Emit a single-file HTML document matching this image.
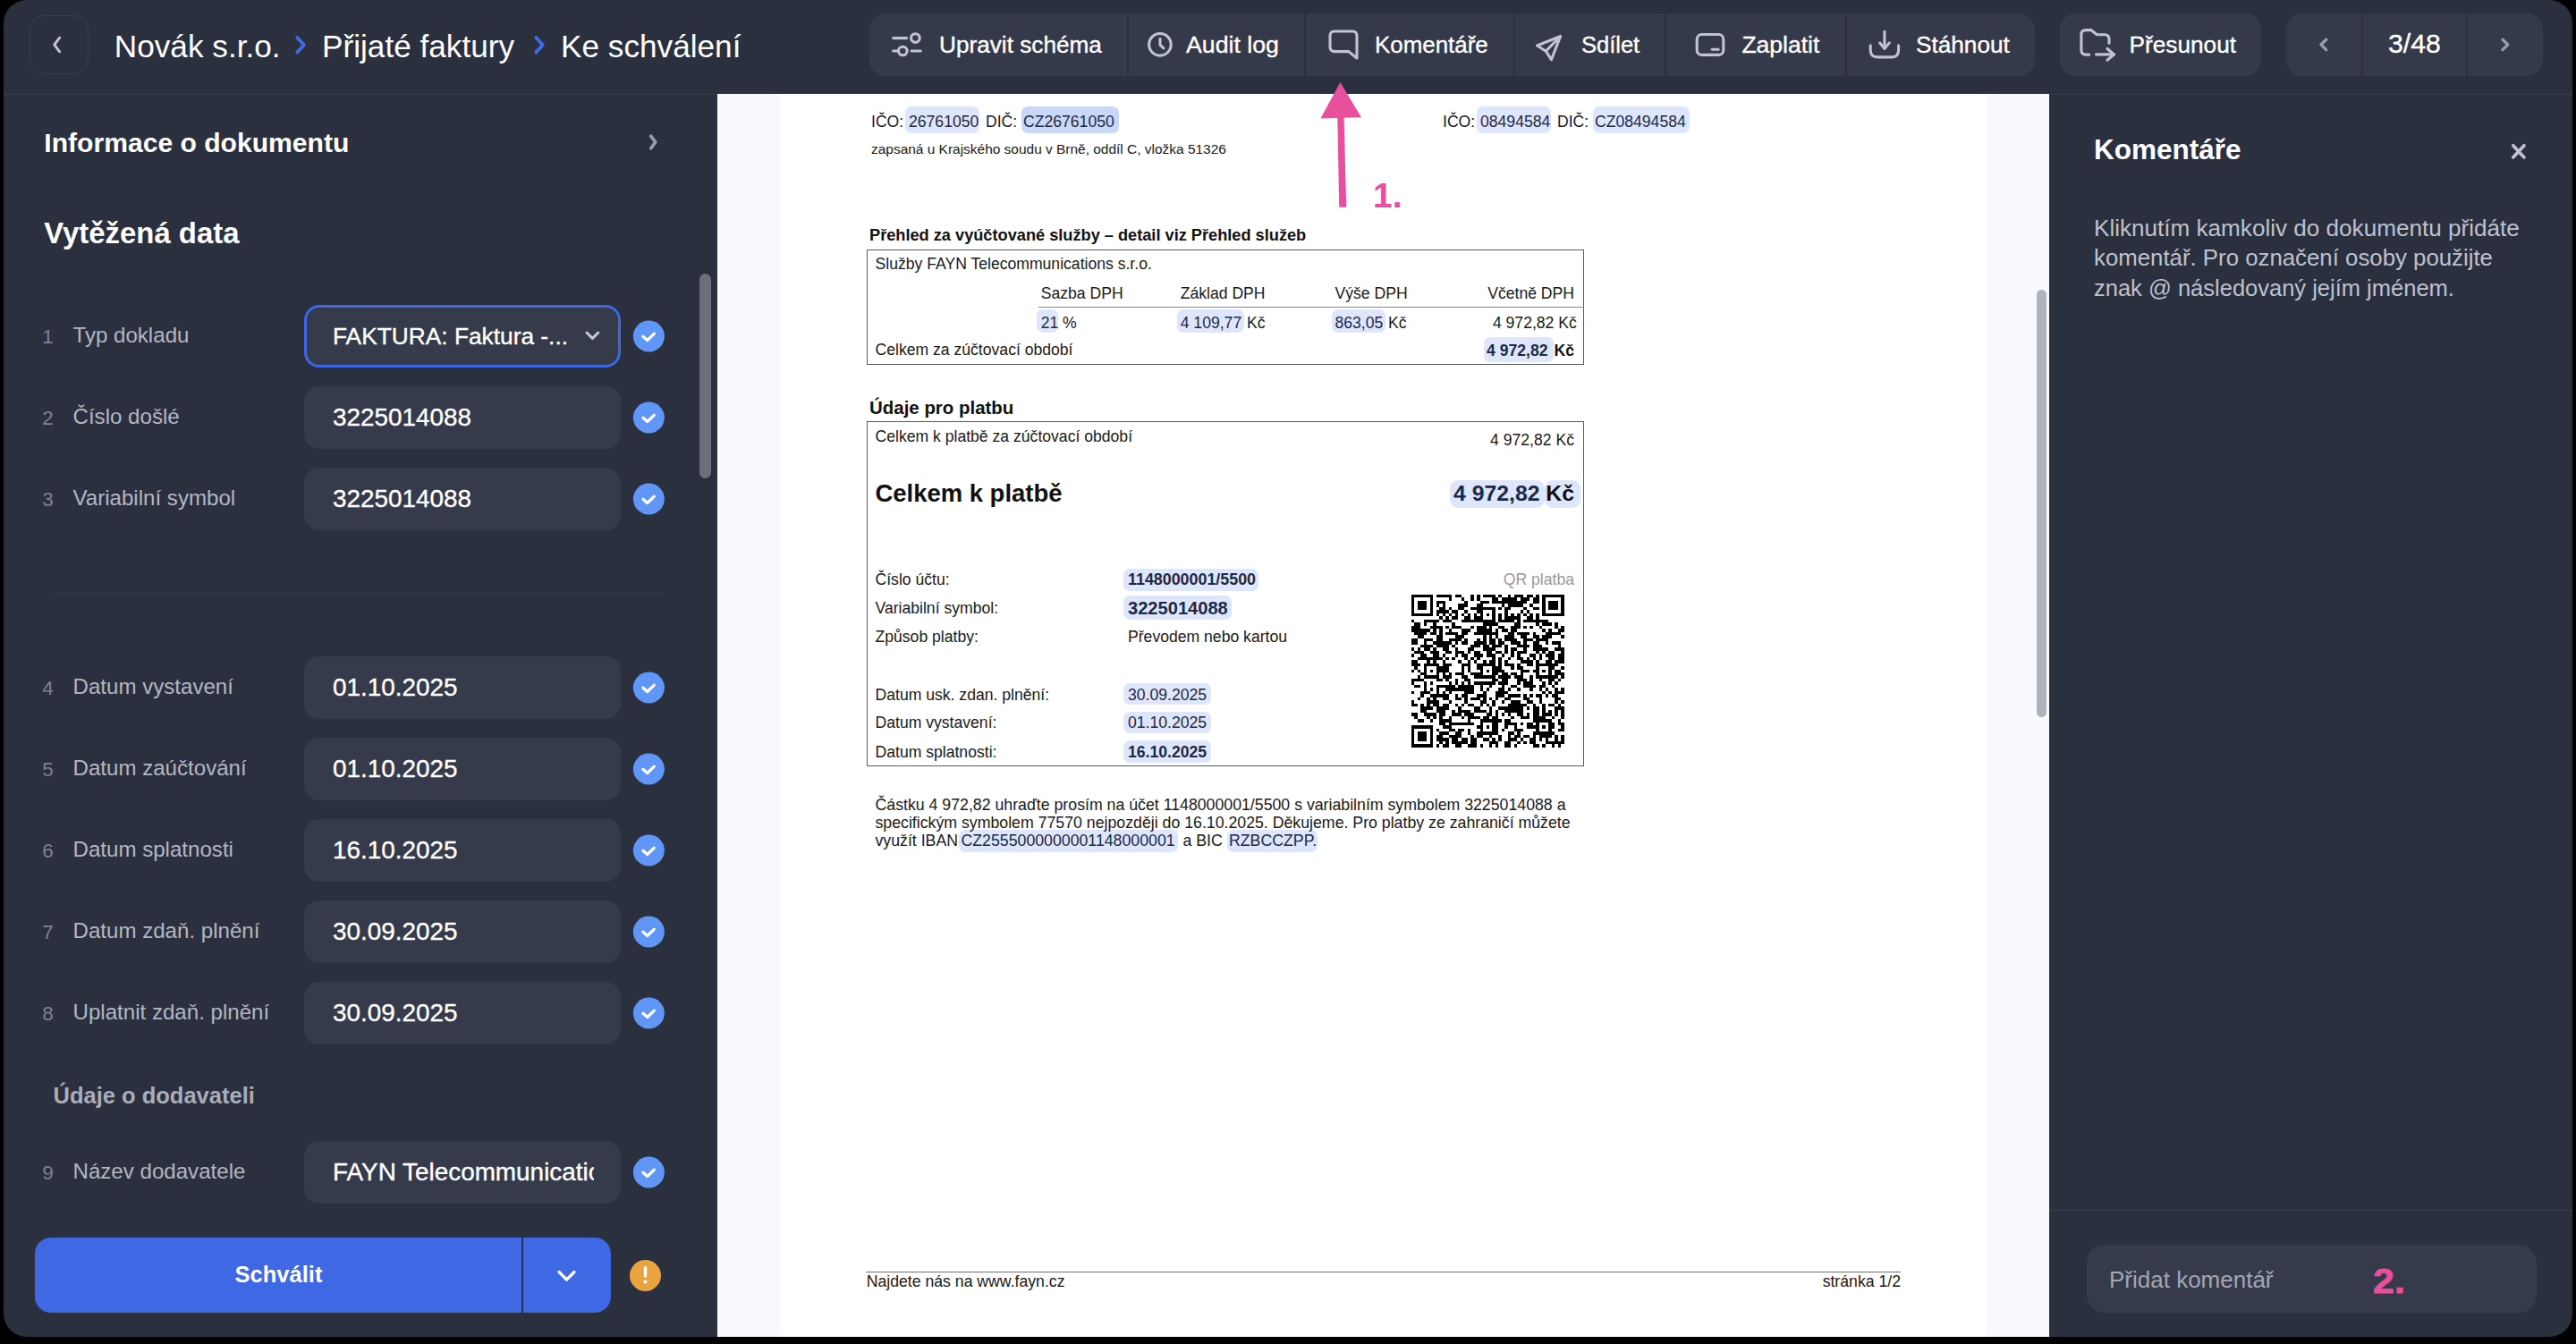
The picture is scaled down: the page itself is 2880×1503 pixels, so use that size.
<!DOCTYPE html>
<html><head><meta charset="utf-8"><title>Ke schválení</title>
<style>
html,body{margin:0;padding:0;background:#000;width:2880px;height:1503px;overflow:hidden;}
#app{position:absolute;left:4px;top:0;width:2872px;height:1495px;border-radius:26px;overflow:hidden;background:#2b303f;}
#stage{position:absolute;left:-4px;top:0;width:2880px;height:1503px;}
.t{position:absolute;white-space:nowrap;line-height:1;font-family:"Liberation Sans",sans-serif;}
.r{position:absolute;}
.s{position:absolute;overflow:visible;}
</style></head><body><div id="app"><div id="stage">
<div class="r" style="left:0.0px;top:105.0px;width:2880.0px;height:1.0px;background:#3a3f4e;border-radius:0px;"></div>
<div class="r" style="left:33px;top:17px;width:64px;height:64px;border:1px solid #393d4d;border-radius:16px;"></div>
<svg class="s" style="left:0;top:0" width="2880" height="110" viewBox="0 0 2880 110"><g fill="none" stroke="#c0c4d2" stroke-width="2.9" stroke-linecap="round" stroke-linejoin="round"><polyline points="66.7,42.2 60.7,50 66.7,57.8"/></g><g fill="none" stroke="#3e6be8" stroke-width="3.8" stroke-linecap="round" stroke-linejoin="round"><polyline points="332.3,42 339.8,50.2 332.3,58.5"/><polyline points="599.3,42 606.8,50.2 599.3,58.5"/></g></svg>
<div class="t" style="left:127.8px;top:33.9px;font-size:35.2px;color:#ffffff;">Novák s.r.o.</div>
<div class="t" style="left:360.0px;top:33.9px;font-size:35.2px;color:#ffffff;">Přijaté faktury</div>
<div class="t" style="left:627.0px;top:33.9px;font-size:35.2px;color:#ffffff;">Ke schválení</div>
<div class="r" style="left:972.0px;top:15.0px;width:1303.0px;height:70.0px;background:#353a4a;border-radius:18px;"></div>
<div class="r" style="left:1260.0px;top:15.0px;width:2.0px;height:70.0px;background:#2c303e;border-radius:0px;"></div>
<div class="r" style="left:1458.0px;top:15.0px;width:2.0px;height:70.0px;background:#2c303e;border-radius:0px;"></div>
<div class="r" style="left:1692.0px;top:15.0px;width:2.0px;height:70.0px;background:#2c303e;border-radius:0px;"></div>
<div class="r" style="left:1861.0px;top:15.0px;width:2.0px;height:70.0px;background:#2c303e;border-radius:0px;"></div>
<div class="r" style="left:2063.0px;top:15.0px;width:2.0px;height:70.0px;background:#2c303e;border-radius:0px;"></div>
<div class="r" style="left:2303.0px;top:15.0px;width:225.0px;height:70.0px;background:#353a4a;border-radius:18px;"></div>
<div class="r" style="left:2556.0px;top:15.0px;width:287.0px;height:70.0px;background:#353a4a;border-radius:18px;"></div>
<div class="r" style="left:2640.0px;top:15.0px;width:2.0px;height:70.0px;background:#2c303e;border-radius:0px;"></div>
<div class="r" style="left:2757.0px;top:15.0px;width:2.0px;height:70.0px;background:#2c303e;border-radius:0px;"></div>
<div class="t" style="left:1050.0px;top:37.3px;font-size:26.2px;color:#ffffff;-webkit-text-stroke:0.35px #fff;">Upravit schéma</div>
<div class="t" style="left:1326.0px;top:36.9px;font-size:26.7px;color:#ffffff;-webkit-text-stroke:0.35px #fff;">Audit log</div>
<div class="t" style="left:1537.0px;top:37.6px;font-size:25.9px;color:#ffffff;-webkit-text-stroke:0.35px #fff;">Komentáře</div>
<div class="t" style="left:1768.0px;top:37.9px;font-size:25.5px;color:#ffffff;-webkit-text-stroke:0.35px #fff;">Sdílet</div>
<div class="t" style="left:1947.4px;top:37.1px;font-size:26.5px;color:#ffffff;-webkit-text-stroke:0.35px #fff;">Zaplatit</div>
<div class="t" style="left:2142.0px;top:37.3px;font-size:26.2px;color:#ffffff;-webkit-text-stroke:0.35px #fff;">Stáhnout</div>
<div class="t" style="left:2380.6px;top:37.3px;font-size:26.2px;color:#ffffff;-webkit-text-stroke:0.35px #fff;">Přesunout</div>
<div class="t" style="left:2670.0px;top:33.9px;font-size:30.2px;color:#ffffff;-webkit-text-stroke:0.35px #fff;">3/48</div>
<svg class="s" style="left:0;top:0" width="2880" height="110" viewBox="0 0 2880 110"><g fill="none" stroke="#c0c4d2" stroke-width="3.1" stroke-linecap="round" stroke-linejoin="round"><line x1="998.7" y1="42.6" x2="1013.6" y2="42.6"/><circle cx="1023.4" cy="42.6" r="4.8"/><line x1="998.7" y1="57" x2="1004.5" y2="57"/><circle cx="1009.3" cy="57" r="4.8"/><line x1="1019.1" y1="57" x2="1029.3" y2="57"/><circle cx="1296.9" cy="49.8" r="12.3"/><polyline points="1297,43.4 1297,50.3 1300.9,53.9"/><path d="M1517,65 L1517,40 Q1517,35 1512,35 L1492,35 Q1487,35 1487,40 L1487,52.6 Q1487,57.6 1492,57.6 L1507.8,57.6 Z"/><path d="M1744.7,40.5 L1718.5,51 L1728.3,57.2 L1734.4,66.7 Z M1728.3,57.2 L1744.7,40.5"/><rect x="1897.2" y="38.5" width="29.6" height="22.9" rx="5.5"/><line x1="1914.2" y1="55.2" x2="1921.1" y2="55.2"/><line x1="2106.9" y1="35.2" x2="2106.9" y2="54.2"/><polyline points="2101.7,48 2106.9,54.2 2112.3,48"/><path d="M2091.2,50.9 L2091.2,56 Q2091.2,63.9 2099,63.9 L2115,63.9 Q2122.6,63.9 2122.6,56 L2122.6,50.9"/><path d="M2335.7,61.1 L2332,61.1 Q2326.9,61.1 2326.9,56 L2326.9,38.6 Q2326.9,33.6 2332,33.6 L2338,33.6 L2344.2,38.8 L2353,38.8 Q2358,38.8 2358,43.8 L2358,48.3"/><line x1="2343.6" y1="60.9" x2="2363.5" y2="60.9"/><polyline points="2356,54.5 2363.5,60.9 2356,67.3"/></g><g fill="none" stroke="#989dab" stroke-width="3.4" stroke-linecap="round" stroke-linejoin="round"><polyline points="2600.7,44.3 2594.9,49.9 2600.7,55.6"/><polyline points="2798,44.3 2803.8,49.9 2798,55.6"/></g></svg>
<div class="t" style="left:49.3px;top:144.5px;font-size:30.1px;color:#ffffff;font-weight:700;">Informace o dokumentu</div>
<svg class="s" style="left:715px;top:145px" width="30" height="30" viewBox="0 0 30 30"><polyline points="12.7,7.1 17.8,14 12.7,20.9" fill="none" stroke="#989dab" stroke-width="3.6" stroke-linecap="round" stroke-linejoin="round"/></svg>
<div class="t" style="left:49.3px;top:245.2px;font-size:32.9px;color:#ffffff;font-weight:700;">Vytěžená data</div>
<div class="r" style="left:781.5px;top:306.0px;width:13.5px;height:229.0px;background:#6b6f7e;border-radius:7px;"></div>
<div class="t" style="left:47.3px;top:365.5px;font-size:22.5px;color:#7d8291;">1</div>
<div class="t" style="left:81.5px;top:362.6px;font-size:24.1px;color:#b3b7c2;">Typ dokladu</div>
<div class="r" style="left:340px;top:341px;width:354px;height:70px;box-sizing:border-box;border:3px solid #3c67e6;background:#363b4b;border-radius:17px;"></div>
<div class="t" style="left:372.0px;top:363.2px;font-size:26.3px;color:#ffffff;-webkit-text-stroke:0.35px #fff;">FAKTURA: Faktura -...</div>
<div class="t" style="left:47.3px;top:456.5px;font-size:22.5px;color:#7d8291;">2</div>
<div class="t" style="left:81.5px;top:453.6px;font-size:24.1px;color:#b3b7c2;">Číslo došlé</div>
<div class="r" style="left:340.0px;top:432.0px;width:354.0px;height:70.0px;background:#363b4b;border-radius:17px;"></div>
<div class="t" style="left:372.0px;top:452.9px;font-size:27.9px;color:#ffffff;-webkit-text-stroke:0.35px #fff;">3225014088</div>
<div class="t" style="left:47.3px;top:547.5px;font-size:22.5px;color:#7d8291;">3</div>
<div class="t" style="left:81.5px;top:544.6px;font-size:24.1px;color:#b3b7c2;">Variabilní symbol</div>
<div class="r" style="left:340.0px;top:523.0px;width:354.0px;height:70.0px;background:#363b4b;border-radius:17px;"></div>
<div class="t" style="left:372.0px;top:543.9px;font-size:27.9px;color:#ffffff;-webkit-text-stroke:0.35px #fff;">3225014088</div>
<div class="t" style="left:47.3px;top:758.5px;font-size:22.5px;color:#7d8291;">4</div>
<div class="t" style="left:81.5px;top:755.6px;font-size:24.1px;color:#b3b7c2;">Datum vystavení</div>
<div class="r" style="left:340.0px;top:734.0px;width:354.0px;height:70.0px;background:#363b4b;border-radius:17px;"></div>
<div class="t" style="left:372.0px;top:754.9px;font-size:27.9px;color:#ffffff;-webkit-text-stroke:0.35px #fff;">01.10.2025</div>
<div class="t" style="left:47.3px;top:849.5px;font-size:22.5px;color:#7d8291;">5</div>
<div class="t" style="left:81.5px;top:846.6px;font-size:24.1px;color:#b3b7c2;">Datum zaúčtování</div>
<div class="r" style="left:340.0px;top:825.0px;width:354.0px;height:70.0px;background:#363b4b;border-radius:17px;"></div>
<div class="t" style="left:372.0px;top:845.9px;font-size:27.9px;color:#ffffff;-webkit-text-stroke:0.35px #fff;">01.10.2025</div>
<div class="t" style="left:47.3px;top:940.5px;font-size:22.5px;color:#7d8291;">6</div>
<div class="t" style="left:81.5px;top:937.6px;font-size:24.1px;color:#b3b7c2;">Datum splatnosti</div>
<div class="r" style="left:340.0px;top:916.0px;width:354.0px;height:70.0px;background:#363b4b;border-radius:17px;"></div>
<div class="t" style="left:372.0px;top:936.9px;font-size:27.9px;color:#ffffff;-webkit-text-stroke:0.35px #fff;">16.10.2025</div>
<div class="t" style="left:47.3px;top:1031.5px;font-size:22.5px;color:#7d8291;">7</div>
<div class="t" style="left:81.5px;top:1028.6px;font-size:24.1px;color:#b3b7c2;">Datum zdaň. plnění</div>
<div class="r" style="left:340.0px;top:1007.0px;width:354.0px;height:70.0px;background:#363b4b;border-radius:17px;"></div>
<div class="t" style="left:372.0px;top:1027.9px;font-size:27.9px;color:#ffffff;-webkit-text-stroke:0.35px #fff;">30.09.2025</div>
<div class="t" style="left:47.3px;top:1122.5px;font-size:22.5px;color:#7d8291;">8</div>
<div class="t" style="left:81.5px;top:1119.6px;font-size:24.1px;color:#b3b7c2;">Uplatnit zdaň. plnění</div>
<div class="r" style="left:340.0px;top:1098.0px;width:354.0px;height:70.0px;background:#363b4b;border-radius:17px;"></div>
<div class="t" style="left:372.0px;top:1118.9px;font-size:27.9px;color:#ffffff;-webkit-text-stroke:0.35px #fff;">30.09.2025</div>
<div class="t" style="left:47.3px;top:1300.5px;font-size:22.5px;color:#7d8291;">9</div>
<div class="t" style="left:81.5px;top:1297.6px;font-size:24.1px;color:#b3b7c2;">Název dodavatele</div>
<div class="r" style="left:340.0px;top:1276.0px;width:354.0px;height:70.0px;background:#363b4b;border-radius:17px;"></div>
<div class="t" style="left:372px;top:1276px;width:292px;height:70px;overflow:hidden;"><div class="t" style="left:0.0px;top:20.9px;font-size:27.9px;color:#ffffff;-webkit-text-stroke:0.35px #fff;">FAYN Telecommunications s.r.o.</div>
</div>
<svg class="s" style="left:0;top:0" width="800" height="1503" viewBox="0 0 800 1503"><polyline points="656,372 662.4,378.4 668.8,372" fill="none" stroke="#c5c8d2" stroke-width="3" stroke-linecap="round" stroke-linejoin="round"/><circle cx="725.4" cy="376" r="17.5" fill="#6097f6"/><polyline points="719,376.2 723.7,380.5 731.4,373.2" fill="none" stroke="#fff" stroke-width="3.2" stroke-linecap="round" stroke-linejoin="round"/><circle cx="725.4" cy="467" r="17.5" fill="#6097f6"/><polyline points="719,467.2 723.7,471.5 731.4,464.2" fill="none" stroke="#fff" stroke-width="3.2" stroke-linecap="round" stroke-linejoin="round"/><circle cx="725.4" cy="558" r="17.5" fill="#6097f6"/><polyline points="719,558.2 723.7,562.5 731.4,555.2" fill="none" stroke="#fff" stroke-width="3.2" stroke-linecap="round" stroke-linejoin="round"/><circle cx="725.4" cy="769" r="17.5" fill="#6097f6"/><polyline points="719,769.2 723.7,773.5 731.4,766.2" fill="none" stroke="#fff" stroke-width="3.2" stroke-linecap="round" stroke-linejoin="round"/><circle cx="725.4" cy="860" r="17.5" fill="#6097f6"/><polyline points="719,860.2 723.7,864.5 731.4,857.2" fill="none" stroke="#fff" stroke-width="3.2" stroke-linecap="round" stroke-linejoin="round"/><circle cx="725.4" cy="951" r="17.5" fill="#6097f6"/><polyline points="719,951.2 723.7,955.5 731.4,948.2" fill="none" stroke="#fff" stroke-width="3.2" stroke-linecap="round" stroke-linejoin="round"/><circle cx="725.4" cy="1042" r="17.5" fill="#6097f6"/><polyline points="719,1042.2 723.7,1046.5 731.4,1039.2" fill="none" stroke="#fff" stroke-width="3.2" stroke-linecap="round" stroke-linejoin="round"/><circle cx="725.4" cy="1133" r="17.5" fill="#6097f6"/><polyline points="719,1133.2 723.7,1137.5 731.4,1130.2" fill="none" stroke="#fff" stroke-width="3.2" stroke-linecap="round" stroke-linejoin="round"/><circle cx="725.4" cy="1311" r="17.5" fill="#6097f6"/><polyline points="719,1311.2 723.7,1315.5 731.4,1308.2" fill="none" stroke="#fff" stroke-width="3.2" stroke-linecap="round" stroke-linejoin="round"/></svg>
<div class="r" style="left:60.0px;top:663.0px;width:683.0px;height:1.0px;background:#373b4a;border-radius:0px;"></div>
<div class="t" style="left:59.5px;top:1212.9px;font-size:25.5px;color:#a9adb8;font-weight:700;">Údaje o dodavateli</div>
<div class="r" style="left:39.0px;top:1384.0px;width:644.0px;height:84.0px;background:#3f68e4;border-radius:18px;"></div>
<div class="r" style="left:582.5px;top:1384.0px;width:2.5px;height:84.0px;background:#2c303e;border-radius:0px;"></div>
<div class="t" style="left:311.5px;top:1413.4px;font-size:25.5px;color:#ffffff;font-weight:700;transform:translateX(-50%);">Schválit</div>
<svg class="s" style="left:0;top:1380px" width="800" height="100" viewBox="0 1380 800 100"><polyline points="625,1422.5 633.5,1431 642,1422.5" fill="none" stroke="#fff" stroke-width="3.2" stroke-linecap="round" stroke-linejoin="round"/><circle cx="721.5" cy="1426.5" r="17.5" fill="#eaa43f"/><line x1="721.5" y1="1417.5" x2="721.5" y2="1427" stroke="#fff" stroke-width="3.4" stroke-linecap="round"/><circle cx="721.5" cy="1433.5" r="2" fill="#fff"/></svg>
<div class="r" style="left:802.0px;top:105.0px;width:1489.0px;height:1390.0px;background:#f7f9fc;border-radius:0px;"></div>
<div class="r" style="left:872.0px;top:105.0px;width:1349.0px;height:1390.0px;background:#ffffff;border-radius:0px;"></div>
<div class="r" style="left:2277.0px;top:324.0px;width:11.0px;height:478.0px;background:#adb2bb;border-radius:5.5px;"></div>
<div class="r" style="left:1012.4px;top:118.8px;width:82.6px;height:30.0px;background:#dde6fb;border-radius:7px;"></div>
<div class="r" style="left:1142.0px;top:118.8px;width:108.7px;height:30.0px;background:#c9d8f7;border-radius:7px;"></div>
<div class="r" style="left:1651.0px;top:118.8px;width:82.8px;height:29.9px;background:#dde6fb;border-radius:7px;"></div>
<div class="r" style="left:1780.6px;top:118.8px;width:108.4px;height:29.9px;background:#dde6fb;border-radius:7px;"></div>
<div class="t" style="left:974.0px;top:127.9px;font-size:17.6px;color:#1a1a1a;">IČO:</div>
<div class="t" style="left:1016.0px;top:127.9px;font-size:17.6px;color:#1f2945;">26761050</div>
<div class="t" style="left:1102.0px;top:127.9px;font-size:17.6px;color:#1a1a1a;">DIČ:</div>
<div class="t" style="left:1144.0px;top:127.9px;font-size:17.6px;color:#1f2945;">CZ26761050</div>
<div class="t" style="left:1613.0px;top:127.6px;font-size:17.6px;color:#1a1a1a;">IČO:</div>
<div class="t" style="left:1655.0px;top:127.6px;font-size:17.6px;color:#1f2945;">08494584</div>
<div class="t" style="left:1741.0px;top:127.6px;font-size:17.6px;color:#1a1a1a;">DIČ:</div>
<div class="t" style="left:1783.0px;top:127.6px;font-size:17.6px;color:#1f2945;">CZ08494584</div>
<div class="t" style="left:974.0px;top:159.3px;font-size:15.46px;color:#1a1a1a;">zapsaná u Krajského soudu v Brně, oddíl C, vložka 51326</div>
<div class="t" style="left:972.0px;top:254.3px;font-size:18.2px;color:#111;font-weight:700;">Přehled za vyúčtované služby – detail viz Přehled služeb</div>
<div class="r" style="left:969px;top:279px;width:802px;height:129px;box-sizing:border-box;border:1.5px solid #5a5a5a;"></div>
<div class="t" style="left:978.5px;top:286.7px;font-size:17.6px;color:#1a1a1a;">Služby FAYN Telecommunications s.r.o.</div>
<div class="t" style="left:1163.7px;top:319.5px;font-size:17.6px;color:#1a1a1a;">Sazba DPH</div>
<div class="t" style="left:1319.7px;top:319.5px;font-size:17.6px;color:#1a1a1a;">Základ DPH</div>
<div class="t" style="left:1492.5px;top:319.5px;font-size:17.6px;color:#1a1a1a;">Výše DPH</div>
<div class="t" style="right:1120.0px;top:319.5px;font-size:17.6px;color:#1a1a1a;">Včetně DPH</div>
<div class="r" style="left:1161.0px;top:342.8px;width:610.0px;height:1.2px;background:#8a8a8a;border-radius:0px;"></div>
<div class="r" style="left:1159.0px;top:345.5px;width:24.0px;height:26.1px;background:#dde6fb;border-radius:7px;"></div>
<div class="r" style="left:1316.0px;top:345.5px;width:75.3px;height:26.1px;background:#dde6fb;border-radius:7px;"></div>
<div class="r" style="left:1489.0px;top:345.5px;width:60.0px;height:26.1px;background:#dde6fb;border-radius:7px;"></div>
<div class="t" style="left:1163.7px;top:352.7px;font-size:17.6px;color:#1f2945;">21</div>
<div class="t" style="left:1188.0px;top:352.7px;font-size:17.6px;color:#1a1a1a;">%</div>
<div class="t" style="left:1319.7px;top:352.7px;font-size:17.6px;color:#1f2945;">4 109,77</div>
<div class="t" style="left:1394.0px;top:352.7px;font-size:17.6px;color:#1a1a1a;">Kč</div>
<div class="t" style="left:1492.5px;top:352.7px;font-size:17.6px;color:#1f2945;">863,05</div>
<div class="t" style="left:1552.0px;top:352.7px;font-size:17.6px;color:#1a1a1a;">Kč</div>
<div class="t" style="right:1117.2px;top:352.7px;font-size:17.6px;color:#1a1a1a;">4 972,82 Kč</div>
<div class="t" style="left:978.5px;top:383.4px;font-size:17.6px;color:#1a1a1a;">Celkem za zúčtovací období</div>
<div class="r" style="left:1658.7px;top:376.7px;width:78.0px;height:28.6px;background:#dde6fb;border-radius:7px;"></div>
<div class="t" style="left:1662.0px;top:383.6px;font-size:17.6px;color:#1f2945;font-weight:700;">4 972,82</div>
<div class="t" style="right:1120.0px;top:383.6px;font-size:17.6px;color:#111;font-weight:700;">Kč</div>
<div class="t" style="left:972.0px;top:445.5px;font-size:20.47px;color:#111;font-weight:700;">Údaje pro platbu</div>
<div class="r" style="left:969px;top:471px;width:802px;height:386px;box-sizing:border-box;border:1.5px solid #5a5a5a;"></div>
<div class="t" style="left:978.5px;top:479.7px;font-size:17.6px;color:#1a1a1a;">Celkem k platbě za zúčtovací období</div>
<div class="t" style="right:1120.0px;top:483.5px;font-size:17.6px;color:#1a1a1a;">4 972,82 Kč</div>
<div class="t" style="left:978.5px;top:537.8px;font-size:27.45px;color:#111;font-weight:700;">Celkem k platbě</div>
<div class="r" style="left:1620.5px;top:536.6px;width:106.5px;height:31.2px;background:#dde6fb;border-radius:9px;"></div>
<div class="r" style="left:1727.0px;top:536.6px;width:40.0px;height:31.2px;background:#dde6fb;border-radius:9px;"></div>
<div class="t" style="left:1625.0px;top:540.0px;font-size:24.8px;color:#1f2945;font-weight:700;">4 972,82</div>
<div class="t" style="right:1120.0px;top:540.0px;font-size:24.8px;color:#111;font-weight:700;">Kč</div>
<div class="r" style="left:1256.0px;top:636.4px;width:151.0px;height:24.6px;background:#dde6fb;border-radius:7px;"></div>
<div class="t" style="left:978.5px;top:639.9px;font-size:17.6px;color:#1a1a1a;">Číslo účtu:</div>
<div class="t" style="left:1261.0px;top:639.7px;font-size:17.86px;color:#1f2945;font-weight:700;">1148000001/5500</div>
<div class="t" style="right:1120.0px;top:639.9px;font-size:17.6px;color:#9a9a9a;">QR platba</div>
<div class="r" style="left:1256.0px;top:665.6px;width:121.0px;height:27.4px;background:#dde6fb;border-radius:7px;"></div>
<div class="t" style="left:978.5px;top:671.8px;font-size:17.6px;color:#1a1a1a;">Variabilní symbol:</div>
<div class="t" style="left:1261.0px;top:669.7px;font-size:20.1px;color:#1f2945;font-weight:700;">3225014088</div>
<div class="t" style="left:978.5px;top:703.6px;font-size:17.6px;color:#1a1a1a;">Způsob platby:</div>
<div class="t" style="left:1261.0px;top:703.6px;font-size:17.6px;color:#1a1a1a;">Převodem nebo kartou</div>
<div class="r" style="left:1256.0px;top:763.7px;width:97.8px;height:24.8px;background:#dde6fb;border-radius:7px;"></div>
<div class="r" style="left:1256.0px;top:795.5px;width:97.8px;height:24.9px;background:#dde6fb;border-radius:7px;"></div>
<div class="r" style="left:1256.0px;top:828.0px;width:97.8px;height:24.8px;background:#dde6fb;border-radius:7px;"></div>
<div class="t" style="left:978.5px;top:768.5px;font-size:17.6px;color:#1a1a1a;">Datum usk. zdan. plnění:</div>
<div class="t" style="left:1261.0px;top:768.5px;font-size:17.6px;color:#1f2945;">30.09.2025</div>
<div class="t" style="left:978.5px;top:799.7px;font-size:17.6px;color:#1a1a1a;">Datum vystavení:</div>
<div class="t" style="left:1261.0px;top:799.7px;font-size:17.6px;color:#1f2945;">01.10.2025</div>
<div class="t" style="left:978.5px;top:832.5px;font-size:17.6px;color:#1a1a1a;">Datum splatnosti:</div>
<div class="t" style="left:1261.0px;top:832.5px;font-size:17.6px;color:#1f2945;font-weight:700;">16.10.2025</div>
<svg class="s" style="left:1577.6px;top:665px" width="170.5" height="170.5" viewBox="0 0 49 49" shape-rendering="crispEdges"><path d="M0,0h7v1h-7zM8,0h5v1h-5zM14,0h2v1h-2zM19,0h1v1h-1zM21,0h1v1h-1zM23,0h4v1h-4zM28,0h1v1h-1zM31,0h1v1h-1zM33,0h3v1h-3zM37,0h2v1h-2zM40,0h1v1h-1zM42,0h7v1h-7zM0,1h1v1h-1zM6,1h1v1h-1zM12,1h1v1h-1zM16,1h1v1h-1zM19,1h1v1h-1zM21,1h1v1h-1zM26,1h2v1h-2zM29,1h5v1h-5zM35,1h3v1h-3zM39,1h2v1h-2zM42,1h1v1h-1zM48,1h1v1h-1zM0,2h1v1h-1zM2,2h3v1h-3zM6,2h1v1h-1zM8,2h3v1h-3zM17,2h1v1h-1zM22,2h3v1h-3zM26,2h11v1h-11zM39,2h2v1h-2zM42,2h1v1h-1zM44,2h3v1h-3zM48,2h1v1h-1zM0,3h1v1h-1zM2,3h3v1h-3zM6,3h1v1h-1zM8,3h1v1h-1zM10,3h1v1h-1zM15,3h3v1h-3zM21,3h2v1h-2zM29,3h1v1h-1zM31,3h5v1h-5zM38,3h1v1h-1zM42,3h1v1h-1zM44,3h3v1h-3zM48,3h1v1h-1zM0,4h1v1h-1zM2,4h3v1h-3zM6,4h1v1h-1zM9,4h2v1h-2zM12,4h1v1h-1zM15,4h2v1h-2zM19,4h8v1h-8zM28,4h1v1h-1zM30,4h2v1h-2zM36,4h1v1h-1zM39,4h2v1h-2zM42,4h1v1h-1zM44,4h3v1h-3zM48,4h1v1h-1zM0,5h1v1h-1zM6,5h1v1h-1zM8,5h4v1h-4zM13,5h2v1h-2zM17,5h1v1h-1zM21,5h2v1h-2zM26,5h1v1h-1zM30,5h1v1h-1zM35,5h1v1h-1zM37,5h1v1h-1zM42,5h1v1h-1zM48,5h1v1h-1zM0,6h7v1h-7zM8,6h1v1h-1zM10,6h1v1h-1zM12,6h1v1h-1zM14,6h1v1h-1zM16,6h1v1h-1zM18,6h1v1h-1zM20,6h1v1h-1zM22,6h1v1h-1zM24,6h1v1h-1zM26,6h1v1h-1zM28,6h1v1h-1zM30,6h1v1h-1zM32,6h1v1h-1zM34,6h1v1h-1zM36,6h1v1h-1zM38,6h1v1h-1zM40,6h1v1h-1zM42,6h7v1h-7zM9,7h1v1h-1zM11,7h1v1h-1zM13,7h2v1h-2zM17,7h2v1h-2zM20,7h3v1h-3zM26,7h1v1h-1zM28,7h1v1h-1zM30,7h5v1h-5zM37,7h2v1h-2zM40,7h1v1h-1zM0,8h1v1h-1zM4,8h5v1h-5zM10,8h3v1h-3zM16,8h11v1h-11zM28,8h5v1h-5zM34,8h1v1h-1zM36,8h8v1h-8zM1,9h2v1h-2zM4,9h1v1h-1zM7,9h1v1h-1zM13,9h1v1h-1zM23,9h5v1h-5zM33,9h2v1h-2zM40,9h1v1h-1zM42,9h3v1h-3zM46,9h1v1h-1zM0,10h3v1h-3zM6,10h4v1h-4zM11,10h1v1h-1zM13,10h3v1h-3zM19,10h1v1h-1zM21,10h3v1h-3zM25,10h1v1h-1zM28,10h2v1h-2zM32,10h3v1h-3zM36,10h1v1h-1zM38,10h1v1h-1zM41,10h1v1h-1zM46,10h1v1h-1zM48,10h1v1h-1zM0,11h6v1h-6zM7,11h1v1h-1zM9,11h1v1h-1zM12,11h1v1h-1zM16,11h3v1h-3zM21,11h5v1h-5zM27,11h1v1h-1zM29,11h2v1h-2zM32,11h2v1h-2zM42,11h1v1h-1zM44,11h1v1h-1zM47,11h2v1h-2zM1,12h4v1h-4zM6,12h2v1h-2zM9,12h1v1h-1zM11,12h4v1h-4zM16,12h2v1h-2zM20,12h8v1h-8zM31,12h2v1h-2zM34,12h4v1h-4zM39,12h1v1h-1zM43,12h5v1h-5zM2,13h2v1h-2zM8,13h2v1h-2zM14,13h3v1h-3zM23,13h1v1h-1zM25,13h1v1h-1zM27,13h1v1h-1zM30,13h3v1h-3zM35,13h2v1h-2zM39,13h2v1h-2zM42,13h3v1h-3zM48,13h1v1h-1zM0,14h2v1h-2zM4,14h3v1h-3zM8,14h2v1h-2zM12,14h4v1h-4zM17,14h1v1h-1zM21,14h1v1h-1zM23,14h1v1h-1zM25,14h2v1h-2zM28,14h1v1h-1zM30,14h4v1h-4zM36,14h3v1h-3zM40,14h4v1h-4zM0,15h2v1h-2zM4,15h1v1h-1zM7,15h6v1h-6zM14,15h1v1h-1zM16,15h2v1h-2zM20,15h4v1h-4zM25,15h2v1h-2zM28,15h2v1h-2zM32,15h3v1h-3zM36,15h1v1h-1zM39,15h2v1h-2zM43,15h1v1h-1zM45,15h3v1h-3zM3,16h4v1h-4zM8,16h4v1h-4zM13,16h1v1h-1zM19,16h3v1h-3zM23,16h2v1h-2zM26,16h3v1h-3zM30,16h1v1h-1zM34,16h4v1h-4zM39,16h3v1h-3zM47,16h1v1h-1zM0,17h1v1h-1zM2,17h1v1h-1zM4,17h2v1h-2zM7,17h1v1h-1zM10,17h2v1h-2zM14,17h1v1h-1zM18,17h2v1h-2zM23,17h4v1h-4zM30,17h1v1h-1zM32,17h2v1h-2zM36,17h1v1h-1zM39,17h5v1h-5zM46,17h3v1h-3zM1,18h3v1h-3zM6,18h3v1h-3zM11,18h2v1h-2zM14,18h3v1h-3zM18,18h1v1h-1zM20,18h2v1h-2zM24,18h2v1h-2zM27,18h2v1h-2zM30,18h1v1h-1zM32,18h1v1h-1zM34,18h3v1h-3zM40,18h1v1h-1zM42,18h1v1h-1zM44,18h2v1h-2zM48,18h1v1h-1zM0,19h1v1h-1zM3,19h2v1h-2zM7,19h2v1h-2zM10,19h1v1h-1zM14,19h1v1h-1zM16,19h2v1h-2zM20,19h3v1h-3zM24,19h3v1h-3zM29,19h1v1h-1zM32,19h1v1h-1zM34,19h1v1h-1zM38,19h2v1h-2zM41,19h1v1h-1zM43,19h3v1h-3zM47,19h2v1h-2zM2,20h8v1h-8zM11,20h1v1h-1zM13,20h1v1h-1zM17,20h1v1h-1zM19,20h1v1h-1zM21,20h1v1h-1zM26,20h1v1h-1zM28,20h1v1h-1zM31,20h1v1h-1zM34,20h2v1h-2zM37,20h1v1h-1zM39,20h1v1h-1zM41,20h1v1h-1zM44,20h2v1h-2zM47,20h2v1h-2zM0,21h2v1h-2zM5,21h1v1h-1zM7,21h1v1h-1zM10,21h1v1h-1zM15,21h1v1h-1zM18,21h1v1h-1zM20,21h1v1h-1zM23,21h1v1h-1zM25,21h2v1h-2zM28,21h1v1h-1zM30,21h1v1h-1zM35,21h4v1h-4zM40,21h1v1h-1zM43,21h2v1h-2zM46,21h3v1h-3zM0,22h3v1h-3zM4,22h5v1h-5zM10,22h3v1h-3zM16,22h3v1h-3zM21,22h6v1h-6zM28,22h1v1h-1zM30,22h3v1h-3zM34,22h1v1h-1zM37,22h2v1h-2zM40,22h7v1h-7zM1,23h1v1h-1zM4,23h1v1h-1zM8,23h4v1h-4zM16,23h1v1h-1zM18,23h1v1h-1zM21,23h2v1h-2zM26,23h3v1h-3zM32,23h1v1h-1zM34,23h2v1h-2zM40,23h1v1h-1zM44,23h2v1h-2zM48,23h1v1h-1zM0,24h1v1h-1zM2,24h1v1h-1zM4,24h1v1h-1zM6,24h1v1h-1zM8,24h4v1h-4zM16,24h1v1h-1zM18,24h1v1h-1zM22,24h1v1h-1zM24,24h1v1h-1zM26,24h4v1h-4zM35,24h3v1h-3zM39,24h2v1h-2zM42,24h1v1h-1zM44,24h1v1h-1zM46,24h2v1h-2zM3,25h2v1h-2zM8,25h1v1h-1zM10,25h1v1h-1zM12,25h1v1h-1zM14,25h3v1h-3zM19,25h4v1h-4zM26,25h2v1h-2zM29,25h2v1h-2zM32,25h2v1h-2zM35,25h1v1h-1zM40,25h1v1h-1zM44,25h1v1h-1zM46,25h3v1h-3zM2,26h1v1h-1zM4,26h5v1h-5zM10,26h3v1h-3zM16,26h2v1h-2zM20,26h7v1h-7zM28,26h4v1h-4zM33,26h3v1h-3zM38,26h1v1h-1zM40,26h7v1h-7zM48,26h1v1h-1zM0,27h4v1h-4zM8,27h2v1h-2zM11,27h1v1h-1zM14,27h1v1h-1zM17,27h2v1h-2zM26,27h2v1h-2zM29,27h2v1h-2zM34,27h3v1h-3zM38,27h1v1h-1zM41,27h1v1h-1zM44,27h2v1h-2zM47,27h1v1h-1zM0,28h1v1h-1zM4,28h1v1h-1zM6,28h1v1h-1zM12,28h1v1h-1zM14,28h1v1h-1zM16,28h1v1h-1zM18,28h1v1h-1zM20,28h7v1h-7zM28,28h3v1h-3zM34,28h1v1h-1zM36,28h3v1h-3zM42,28h1v1h-1zM44,28h1v1h-1zM46,28h1v1h-1zM1,29h2v1h-2zM4,29h1v1h-1zM8,29h6v1h-6zM15,29h5v1h-5zM22,29h1v1h-1zM25,29h1v1h-1zM29,29h1v1h-1zM32,29h2v1h-2zM36,29h4v1h-4zM41,29h2v1h-2zM45,29h1v1h-1zM4,30h1v1h-1zM6,30h1v1h-1zM8,30h1v1h-1zM11,30h9v1h-9zM22,30h1v1h-1zM24,30h1v1h-1zM28,30h2v1h-2zM31,30h1v1h-1zM34,30h1v1h-1zM38,30h1v1h-1zM41,30h1v1h-1zM43,30h1v1h-1zM46,30h1v1h-1zM48,30h1v1h-1zM0,31h1v1h-1zM3,31h3v1h-3zM8,31h1v1h-1zM10,31h1v1h-1zM12,31h1v1h-1zM17,31h3v1h-3zM23,31h1v1h-1zM27,31h4v1h-4zM42,31h1v1h-1zM44,31h1v1h-1zM46,31h3v1h-3zM3,32h1v1h-1zM6,32h6v1h-6zM14,32h1v1h-1zM16,32h2v1h-2zM21,32h3v1h-3zM27,32h3v1h-3zM31,32h4v1h-4zM36,32h1v1h-1zM38,32h1v1h-1zM40,32h2v1h-2zM43,32h1v1h-1zM45,32h2v1h-2zM2,33h1v1h-1zM5,33h1v1h-1zM7,33h1v1h-1zM10,33h2v1h-2zM14,33h2v1h-2zM17,33h1v1h-1zM19,33h3v1h-3zM23,33h1v1h-1zM25,33h1v1h-1zM27,33h1v1h-1zM30,33h2v1h-2zM36,33h2v1h-2zM41,33h1v1h-1zM46,33h2v1h-2zM0,34h1v1h-1zM5,34h4v1h-4zM12,34h1v1h-1zM17,34h1v1h-1zM22,34h2v1h-2zM26,34h1v1h-1zM29,34h1v1h-1zM32,34h3v1h-3zM37,34h2v1h-2zM41,34h1v1h-1zM46,34h1v1h-1zM48,34h1v1h-1zM0,35h2v1h-2zM3,35h1v1h-1zM5,35h1v1h-1zM7,35h2v1h-2zM10,35h2v1h-2zM14,35h1v1h-1zM16,35h1v1h-1zM18,35h2v1h-2zM22,35h1v1h-1zM24,35h1v1h-1zM26,35h1v1h-1zM31,35h6v1h-6zM39,35h1v1h-1zM42,35h1v1h-1zM44,35h2v1h-2zM47,35h1v1h-1zM3,36h4v1h-4zM8,36h4v1h-4zM15,36h1v1h-1zM20,36h2v1h-2zM25,36h1v1h-1zM28,36h8v1h-8zM37,36h1v1h-1zM39,36h2v1h-2zM42,36h1v1h-1zM46,36h3v1h-3zM3,37h2v1h-2zM8,37h3v1h-3zM13,37h1v1h-1zM15,37h4v1h-4zM20,37h4v1h-4zM25,37h1v1h-1zM27,37h1v1h-1zM30,37h6v1h-6zM39,37h2v1h-2zM42,37h1v1h-1zM44,37h1v1h-1zM46,37h1v1h-1zM48,37h1v1h-1zM0,38h2v1h-2zM4,38h4v1h-4zM9,38h2v1h-2zM13,38h3v1h-3zM17,38h3v1h-3zM24,38h2v1h-2zM27,38h1v1h-1zM29,38h1v1h-1zM31,38h1v1h-1zM34,38h2v1h-2zM37,38h1v1h-1zM39,38h2v1h-2zM42,38h3v1h-3zM46,38h1v1h-1zM48,38h1v1h-1zM1,39h1v1h-1zM5,39h1v1h-1zM7,39h1v1h-1zM9,39h1v1h-1zM12,39h1v1h-1zM16,39h1v1h-1zM18,39h4v1h-4zM23,39h2v1h-2zM26,39h2v1h-2zM32,39h1v1h-1zM35,39h3v1h-3zM39,39h4v1h-4zM45,39h1v1h-1zM48,39h1v1h-1zM2,40h2v1h-2zM6,40h1v1h-1zM9,40h4v1h-4zM18,40h1v1h-1zM22,40h7v1h-7zM30,40h2v1h-2zM39,40h6v1h-6zM47,40h1v1h-1zM9,41h2v1h-2zM12,41h8v1h-8zM22,41h1v1h-1zM26,41h2v1h-2zM30,41h4v1h-4zM35,41h1v1h-1zM37,41h2v1h-2zM40,41h1v1h-1zM44,41h2v1h-2zM47,41h2v1h-2zM0,42h7v1h-7zM10,42h3v1h-3zM21,42h2v1h-2zM24,42h1v1h-1zM26,42h2v1h-2zM30,42h1v1h-1zM33,42h1v1h-1zM37,42h4v1h-4zM42,42h1v1h-1zM44,42h2v1h-2zM48,42h1v1h-1zM0,43h1v1h-1zM6,43h1v1h-1zM8,43h1v1h-1zM12,43h2v1h-2zM15,43h2v1h-2zM18,43h1v1h-1zM22,43h1v1h-1zM26,43h2v1h-2zM29,43h1v1h-1zM33,43h3v1h-3zM40,43h1v1h-1zM44,43h1v1h-1zM47,43h2v1h-2zM0,44h1v1h-1zM2,44h3v1h-3zM6,44h1v1h-1zM9,44h3v1h-3zM14,44h2v1h-2zM18,44h1v1h-1zM21,44h7v1h-7zM31,44h2v1h-2zM34,44h1v1h-1zM39,44h7v1h-7zM0,45h1v1h-1zM2,45h3v1h-3zM6,45h1v1h-1zM8,45h2v1h-2zM12,45h4v1h-4zM19,45h1v1h-1zM21,45h2v1h-2zM25,45h1v1h-1zM28,45h1v1h-1zM31,45h1v1h-1zM33,45h2v1h-2zM36,45h2v1h-2zM39,45h1v1h-1zM41,45h4v1h-4zM46,45h1v1h-1zM48,45h1v1h-1zM0,46h1v1h-1zM2,46h3v1h-3zM6,46h1v1h-1zM8,46h4v1h-4zM13,46h2v1h-2zM16,46h2v1h-2zM19,46h2v1h-2zM23,46h2v1h-2zM26,46h1v1h-1zM28,46h1v1h-1zM31,46h3v1h-3zM35,46h1v1h-1zM38,46h2v1h-2zM41,46h1v1h-1zM43,46h1v1h-1zM46,46h1v1h-1zM48,46h1v1h-1zM0,47h1v1h-1zM6,47h1v1h-1zM9,47h1v1h-1zM11,47h1v1h-1zM13,47h5v1h-5zM19,47h2v1h-2zM25,47h3v1h-3zM30,47h2v1h-2zM34,47h1v1h-1zM36,47h1v1h-1zM38,47h2v1h-2zM43,47h6v1h-6zM0,48h7v1h-7zM8,48h1v1h-1zM10,48h2v1h-2zM14,48h2v1h-2zM18,48h3v1h-3zM22,48h1v1h-1zM25,48h1v1h-1zM27,48h1v1h-1zM30,48h2v1h-2zM33,48h1v1h-1zM39,48h2v1h-2zM42,48h1v1h-1zM45,48h1v1h-1zM47,48h1v1h-1z" fill="#000"/></svg>
<div class="r" style="left:1072.0px;top:927.7px;width:245.0px;height:25.3px;background:#dde6fb;border-radius:7px;"></div>
<div class="r" style="left:1372.0px;top:927.7px;width:100.5px;height:25.3px;background:#dde6fb;border-radius:7px;"></div>
<div class="t" style="left:978.5px;top:892.0px;font-size:17.73px;color:#1a1a1a;">Částku 4 972,82 uhraďte prosím na účet 1148000001/5500 s variabilním symbolem 3225014088 a</div>
<div class="t" style="left:978.5px;top:912.0px;font-size:17.73px;color:#1a1a1a;">specifickým symbolem 77570 nejpozději do 16.10.2025. Děkujeme. Pro platby ze zahraničí můžete</div>
<div class="t" style="left:978.5px;top:931.8px;font-size:17.73px;color:#1a1a1a;">využít IBAN</div>
<div class="t" style="left:1074.5px;top:931.8px;font-size:17.73px;color:#1f2945;">CZ2555000000001148000001</div>
<div class="t" style="left:1322.5px;top:931.8px;font-size:17.73px;color:#1a1a1a;">a BIC</div>
<div class="t" style="left:1374.0px;top:931.8px;font-size:17.73px;color:#1f2945;">RZBCCZPP.</div>
<div class="r" style="left:968.0px;top:1422.0px;width:1157.0px;height:1.2px;background:#707070;border-radius:0px;"></div>
<div class="t" style="left:968.7px;top:1424.5px;font-size:17.67px;color:#1a1a1a;">Najdete nás na www.fayn.cz</div>
<div class="t" style="right:755.0px;top:1424.5px;font-size:17.67px;color:#1a1a1a;">stránka 1/2</div>
<svg class="s" style="left:1440px;top:80px" width="160" height="170" viewBox="1440 80 160 170"><polygon points="1498.4,92 1476.4,132.5 1522,131.2" fill="#e84f9d"/><polygon points="1495.3,131 1502.6,131 1505.2,231.8 1497.2,231.8" fill="#e84f9d"/></svg>
<div class="t" style="left:1535.0px;top:198.8px;font-size:39px;color:#e84f9d;font-weight:700;font-family:"Liberation Mono",monospace;-webkit-text-stroke:1.2px #e84f9d;">1.</div>
<div class="t" style="left:2341.0px;top:152.3px;font-size:31.5px;color:#ffffff;font-weight:700;">Komentáře</div>
<svg class="s" style="left:2800px;top:155px" width="30" height="30" viewBox="2800 155 30 30"><g stroke="#c0c4d2" stroke-width="3.6" stroke-linecap="round"><line x1="2809.7" y1="162.7" x2="2822" y2="175.9"/><line x1="2822" y1="162.7" x2="2809.7" y2="175.9"/></g></svg>
<div class="t" style="left:2341.0px;top:241.5px;font-size:26.1px;color:#bec2ce;">Kliknutím kamkoliv do dokumentu přidáte</div>
<div class="t" style="left:2341.0px;top:275.7px;font-size:25.8px;color:#bec2ce;">komentář. Pro označení osoby použijte</div>
<div class="t" style="left:2341.0px;top:309.7px;font-size:25.5px;color:#bec2ce;">znak @ následovaný jejím jménem.</div>
<div class="r" style="left:2291.0px;top:1353.0px;width:589.0px;height:1.0px;background:#3a3f4e;border-radius:0px;"></div>
<div class="r" style="left:2333.0px;top:1392.0px;width:503.0px;height:76.0px;background:#363b4b;border-radius:20px;"></div>
<div class="t" style="left:2358.0px;top:1418.0px;font-size:26px;color:#a3a7b3;">Přidat komentář</div>
<div class="t" style="left:2653.0px;top:1413.8px;font-size:38px;color:#e84f9d;font-weight:700;transform:scaleX(1.13);transform-origin:0 0;-webkit-text-stroke:0.8px #e84f9d;">2.</div>
</div></div></body></html>
